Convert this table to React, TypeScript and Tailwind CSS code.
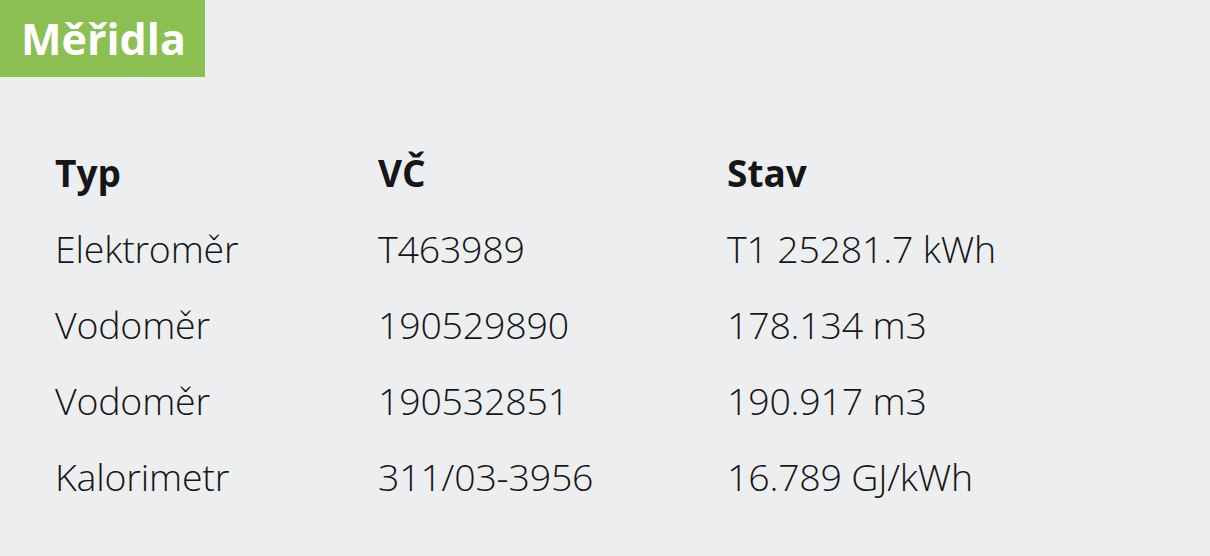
import React from "react";

const rows = [
  { typ: "Elektroměr", vc: "T463989", stav: "T1 25281.7 kWh" },
  { typ: "Vodoměr", vc: "190529890", stav: "178.134 m3" },
  { typ: "Vodoměr", vc: "190532851", stav: "190.917 m3" },
  { typ: "Kalorimetr", vc: "311/03-3956", stav: "16.789 GJ/kWh" },
];

const App = () => {
  return (
    <div
      className="h-[556px] w-[1210px] bg-[#eceef0] text-[#161616]"
      style={{ fontFamily: '"Open Sans", "Noto Sans", sans-serif' }}
    >
      <div className="inline-flex h-[77px] w-[205px] items-center bg-[#8bbf51] pl-[21px]">
        <h2 className="text-[43px] font-bold leading-none text-white">
          Měřidla
        </h2>
      </div>

      <div className="mt-[58px] pl-[55px]">
        <div className="grid h-[76px] grid-cols-[323px_349px_1fr] items-center text-[37px] font-bold">
          <div>Typ</div>
          <div>VČ</div>
          <div>Stav</div>
        </div>
        {rows.map((r, i) => (
          <div
            key={i}
            className="grid h-[76px] grid-cols-[323px_349px_1fr] items-center text-[37.5px] font-light tracking-[-0.2px]"
          >
            <div>{r.typ}</div>
            <div>{r.vc}</div>
            <div>{r.stav}</div>
          </div>
        ))}
      </div>
    </div>
  );
};

export default App;
